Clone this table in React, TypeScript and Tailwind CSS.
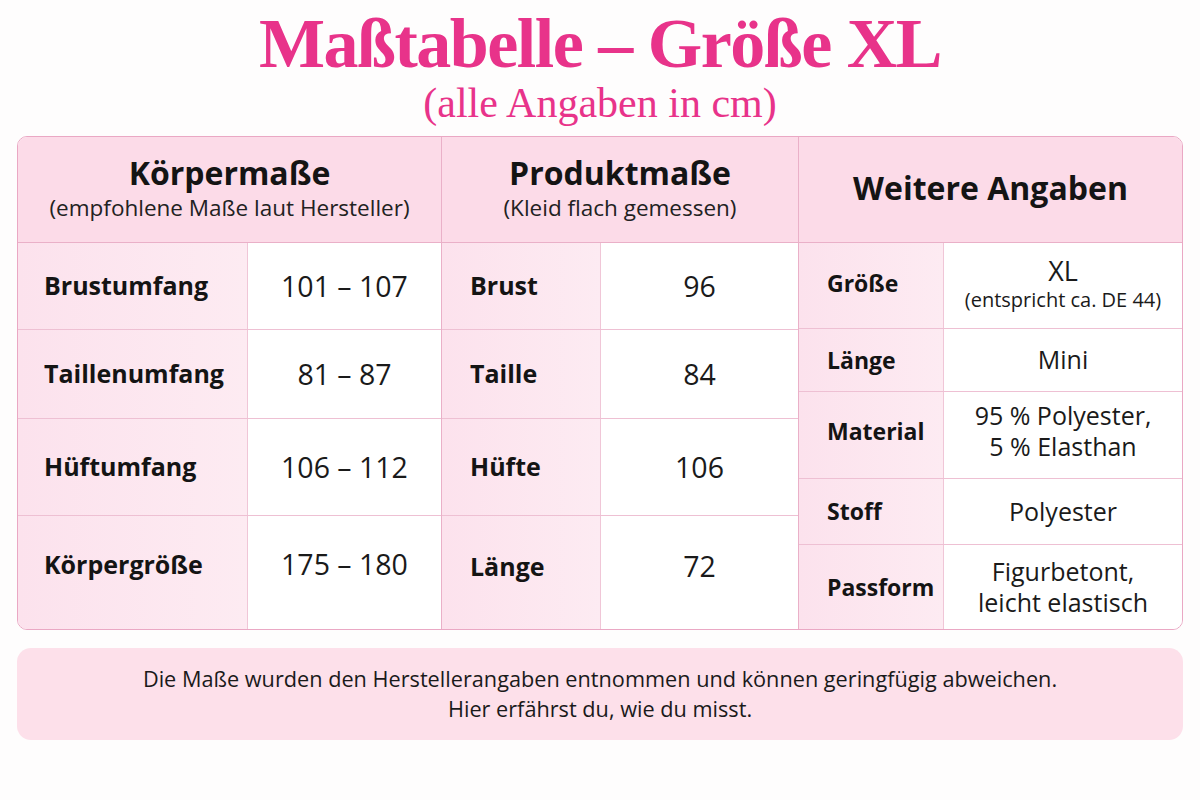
const sans = "font-['Open_Sans','Noto_Sans',sans-serif]";

type Row = { label: string; value: React.ReactNode; h: string };

const koerper: Row[] = [
  { label: "Brustumfang", value: "101 – 107", h: "h-[86px]" },
  { label: "Taillenumfang", value: "81 – 87", h: "h-[88px]" },
  { label: "Hüftumfang", value: "106 – 112", h: "h-[96px]" },
  { label: "Körpergröße", value: "175 – 180", h: "min-h-[112px] pb-4" },
];

const produkt: Row[] = [
  { label: "Brust", value: "96", h: "h-[86px]" },
  { label: "Taille", value: "84", h: "h-[88px]" },
  { label: "Hüfte", value: "106", h: "h-[96px]" },
  { label: "Länge", value: "72", h: "min-h-[112px] pb-3" },
];

const weitere: Row[] = [
  {
    label: "Größe",
    value: (
      <div className="flex flex-col items-center">
        <span className="text-[27px] leading-[32px]">XL</span>
        <span className="text-[20px] leading-[26px]">(entspricht ca. DE 44)</span>
      </div>
    ),
    h: "h-[85px] pb-1",
  },
  { label: "Länge", value: "Mini", h: "h-[62px]" },
  {
    label: "Material",
    value: (
      <div className="flex flex-col items-center">
        <span className="leading-[31px]">95 % Polyester,</span>
        <span className="leading-[31px]">5 % Elasthan</span>
      </div>
    ),
    h: "h-[86px] pb-2",
  },
  { label: "Stoff", value: "Polyester", h: "h-[65px]" },
  {
    label: "Passform",
    value: (
      <div className="flex flex-col items-center">
        <span className="leading-[31px]">Figurbetont,</span>
        <span className="leading-[31px]">leicht elastisch</span>
      </div>
    ),
    h: "min-h-[84px]",
  },
];

function Group({
  title,
  sub,
  rows,
  labelW,
  last,
  labelText,
  valueText,
}: {
  title: string;
  sub?: string;
  rows: Row[];
  labelW: string;
  last?: boolean;
  labelText: string;
  valueText: string;
}) {
  return (
    <div className={`flex flex-col ${last ? "" : "border-r border-[#eab0c8]"}`}>
      <div className="h-[106px] shrink-0 flex flex-col items-center justify-center bg-[#fcdbe8] border-b border-[#eab0c8] pb-1">
        <div className="font-bold text-[#141414] text-[32px] leading-[40px]">{title}</div>
        {sub && <div className="text-[22.5px] leading-[30px] text-[#222]">{sub}</div>}
      </div>
      {rows.map((r, i) => (
        <div
          key={r.label}
          className={`flex ${i < rows.length - 1 ? "border-b border-[#eec0d3]" : "flex-1"}`}
        >
          <div
            className={`${labelW} ${r.h} shrink-0 flex items-center ${labelText} bg-gradient-to-r from-[#fce2ed] to-[#fdebf2] border-r border-[#f0c6d7] font-bold text-[#141414]`}
          >
            {r.label}
          </div>
          <div className={`flex-1 ${r.h} flex items-center justify-center bg-white ${valueText} text-[#1a1a1a]`}>
            {r.value}
          </div>
        </div>
      ))}
    </div>
  );
}

export default function App() {
  return (
    <div className={`w-[1200px] h-[800px] bg-[#fefdfd] ${sans} flex flex-col items-center pt-[8px]`}>
      <h1 className="font-['Liberation_Serif',serif] font-bold text-[70px] leading-[72px] text-[#e8338a] tracking-[-1.5px]">
        Maßtabelle – Größe XL
      </h1>
      <div className="font-['Liberation_Serif',serif] text-[42px] leading-[46px] text-[#e8338a]">
        (alle Angaben in cm)
      </div>

      <div className="mt-[10px] w-[1166px] grid grid-cols-[424px_357px_1fr] border border-[#eaa8c4] rounded-[10px] overflow-hidden">
        <Group
          title="Körpermaße"
          sub="(empfohlene Maße laut Hersteller)"
          rows={koerper}
          labelW="w-[230px]"
          labelText="pl-[26px] text-[25px]"
          valueText="text-[28.5px]"
        />
        <Group
          title="Produktmaße"
          sub="(Kleid flach gemessen)"
          rows={produkt}
          labelW="w-[159px]"
          labelText="pl-[28px] text-[25px]"
          valueText="text-[28.5px]"
        />
        <Group
          title="Weitere Angaben"
          rows={weitere}
          labelW="w-[145px]"
          labelText="pl-[28px] text-[23px]"
          valueText="text-[25px]"
          last
        />
      </div>

      <div className="mt-[18px] w-[1166px] h-[92px] rounded-[14px] bg-[#fde0ea] flex flex-col items-center justify-center text-[21.7px] leading-[30px] text-[#1a1a1a]">
        <p>Die Maße wurden den Herstellerangaben entnommen und können geringfügig abweichen.</p>
        <p>Hier erfährst du, wie du misst.</p>
      </div>
    </div>
  );
}
